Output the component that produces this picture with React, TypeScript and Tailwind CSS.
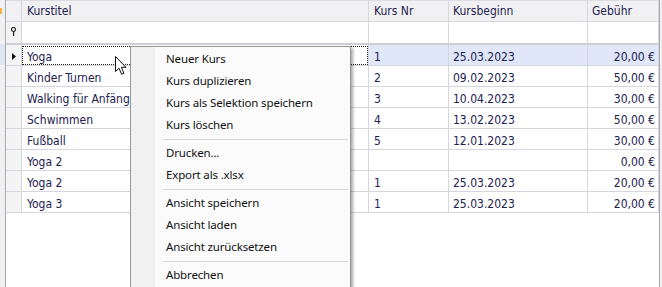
import React from "react";

const rows = [
  { title: "Yoga", nr: "1", start: "25.03.2023", fee: "20,00 €" },
  { title: "Kinder Turnen", nr: "2", start: "09.02.2023", fee: "50,00 €" },
  { title: "Walking für Anfänger", nr: "3", start: "10.04.2023", fee: "30,00 €" },
  { title: "Schwimmen", nr: "4", start: "13.02.2023", fee: "50,00 €" },
  { title: "Fußball", nr: "5", start: "12.01.2023", fee: "30,00 €" },
  { title: "Yoga 2", nr: "", start: "", fee: "0,00 €" },
  { title: "Yoga 2", nr: "1", start: "25.03.2023", fee: "20,00 €" },
  { title: "Yoga 3", nr: "1", start: "25.03.2023", fee: "20,00 €" },
];

const menu: (string | null)[] = [
  "Neuer Kurs",
  "Kurs duplizieren",
  "Kurs als Selektion speichern",
  "Kurs löschen",
  null,
  "Drucken...",
  "Export als .xlsx",
  null,
  "Ansicht speichern",
  "Ansicht laden",
  "Ansicht zurücksetzen",
  null,
  "Abbrechen",
];

const cols = "grid grid-cols-[16px_347px_80px_139px_71px]";
const cell = "border-r border-b border-[#d6d6de] flex items-center overflow-hidden whitespace-nowrap";

export default function App() {
  return (
    <div className="relative w-[662px] h-[287px] overflow-hidden bg-white flex text-[12px] text-[#1c2150] [font-family:'DejaVu_Sans_Condensed','DejaVu_Sans',sans-serif]">
      {/* left neighbour strip */}
      <div className="w-[5px] bg-[#f0f0f0] flex flex-col">
        <div className="h-[8px]" />
        <div className="h-[6px] w-[2px] bg-[#f2b24a]" />
        <div className="h-[30px]" />
        <div className="h-[21px] bg-[#dfe7f7]" />
      </div>

      {/* grid */}
      <div className="border-l border-[#a9a9b0] flex flex-col">
        {/* header */}
        <div className={`${cols} h-[22px] bg-[#f1f1f3] border-t border-[#dcdce2]`}>
          <div className={cell} />
          <div className={`${cell} pl-[5px]`}>Kurstitel</div>
          <div className={`${cell} pl-[5px]`}>Kurs Nr</div>
          <div className={`${cell} pl-[4px]`}>Kursbeginn</div>
          <div className={`${cell} pl-[4px]`}>Gebühr</div>
        </div>
        {/* filter row */}
        <div className={`${cols} h-[23px] border-b-2 border-[#cfcfd6]`}>
          <div className={`${cell} bg-[#f4f4f4] justify-center border-b-0 pb-[3px]`}>
            <svg width="7" height="9" viewBox="0 0 7 9">
              <circle cx="3.5" cy="2.5" r="2" fill="#fff" stroke="#222" strokeWidth="1.2" />
              <rect x="3" y="4" width="1.2" height="5" fill="#222" />
            </svg>
          </div>
          <div className={`${cell} border-b-0`} />
          <div className={`${cell} border-b-0`} />
          <div className={`${cell} border-b-0`} />
          <div className={`${cell} border-b-0`} />
        </div>
        {/* data rows */}
        {rows.map((r, i) => {
          const sel = i === 0;
          return (
            <div key={i} className={`${cols} h-[21px]`}>
              <div className={`${cell} bg-[#f4f4f4] justify-center pt-[3px]`}>
                {sel && (
                  <svg width="4" height="7" viewBox="0 0 4 7">
                    <path d="M0 0 L4 3.5 L0 7 Z" fill="#111" />
                  </svg>
                )}
              </div>
              <div className={`${cell} relative pl-[5px] pt-[4px]`}>
                {sel && <div className="absolute inset-x-0 top-px bottom-0 border border-dotted border-[#222]" />}
                <span className="relative">{r.title}</span>
              </div>
              <div className={`${cell} pl-[5px] pt-[4px] ${sel ? "bg-[#dfe7f8]" : ""}`}>{r.nr}</div>
              <div className={`${cell} pl-[4px] pt-[4px] ${sel ? "bg-[#dfe7f8]" : ""}`}>{r.start}</div>
              <div className={`${cell} justify-end pr-[3px] pt-[4px] ${sel ? "bg-[#dfe7f8]" : ""}`}>{r.fee}</div>
            </div>
          );
        })}
      </div>

      {/* right edge */}
      <div className="flex-1 border-l border-[#a9a9b0] bg-[#f0f0f0]" />

      {/* context menu */}
      <div className="absolute left-[130px] top-[46px] w-[221px] h-[250px] border border-[#979797] bg-[#fbfbfb] flex shadow-[2px_2px_3px_rgba(0,0,0,0.35)] text-[11.5px] text-[#111] [font-family:'Noto_Sans','Open_Sans',sans-serif]">
        <div className="w-[24px] bg-[#f1f1f1]" />
        <div className="flex-1 flex flex-col pt-[1px]">
          {menu.map((m, i) =>
            m === null ? (
              <div key={i} className="h-[6px] flex items-center pl-[8px] pr-[2px]">
                <div className="h-px w-full bg-[#d7d7d7]" />
              </div>
            ) : (
              <div key={i} className="h-[22px] flex items-center pl-[11px] tracking-[-0.15px]">
                {m}
              </div>
            )
          )}
        </div>
      </div>

      {/* mouse cursor */}
      <svg className="absolute left-[115px] top-[56px]" width="13" height="20" viewBox="0 0 13 20">
        <path d="M0.5 0.5 L0.5 15.5 L4 12.2 L6.6 18.3 L8.9 17.3 L6.4 11.3 L11 11.3 Z" fill="#fff" stroke="#111" strokeWidth="1" strokeLinejoin="round" />
      </svg>
    </div>
  );
}
